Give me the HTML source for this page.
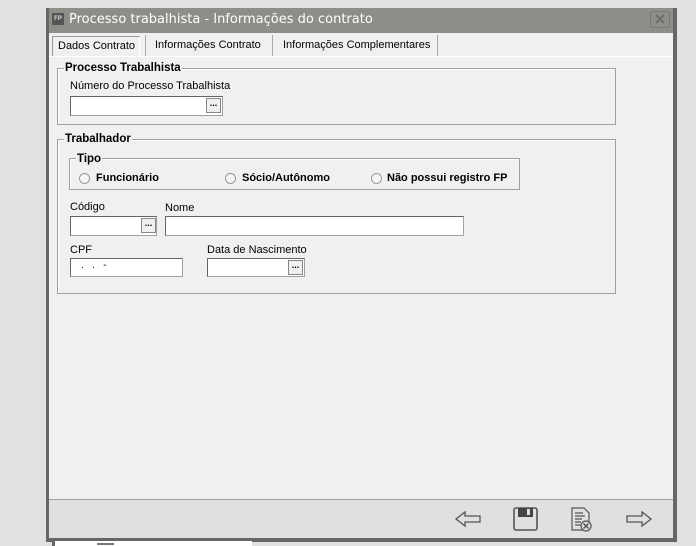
<html><head><style>
body{margin:0;width:696px;height:546px;background:#e1e1e1;position:relative;overflow:hidden;font-family:"Liberation Sans",sans-serif;font-size:11px;color:#000}
.a{position:absolute}
.inp{position:absolute;background:#fff;border:1px solid #a0a0a0;border-top-color:#646464;border-left-color:#646464;box-sizing:border-box}
.btn{position:absolute;width:15px;height:15px;background:#f0f0f0;border:1px solid #888;box-sizing:border-box;font-size:9px;font-weight:bold;text-align:center;line-height:9px}
.grp{position:absolute;border:1px solid #a0a0a0;box-sizing:border-box;box-shadow:1px 1px 0 #fff inset}
.gt{position:absolute;background:#f0f0f0;font-weight:bold;font-size:11.5px;padding:0 1px;line-height:13px}
.rd{position:absolute;width:9px;height:9px;border-radius:50%;border:1px solid #999;background:#f6f6f6}
.rt{position:absolute;font-weight:bold;font-size:11px}
</style></head><body>
<div class="a" style="left:46px;top:8px;width:631px;height:534px;background:#666"></div>
<div class="a" style="left:49px;top:8px;width:624px;height:25px;background:#8e8e88"></div>
<div class="a" style="left:52px;top:13px;width:12px;height:12px;background:#555;color:#ddd;font-size:6px;font-weight:bold;line-height:12px;text-align:center">FP</div>
<div class="a" style="left:69px;top:12px;color:#fff;font-family:'DejaVu Sans',sans-serif;font-size:13px">Processo trabalhista - Informações do contrato</div>
<div class="a" style="left:650px;top:11px;width:20px;height:17px;border:1px solid #777;border-radius:3px;box-sizing:border-box;color:#6c6c6c;font-weight:bold;font-size:14px;text-align:center;line-height:15px">✕</div>
<div class="a" style="left:49px;top:33px;width:624px;height:466px;background:#f0f0f0"></div>
<div class="a" style="left:49px;top:499px;width:624px;height:1px;background:#a0a0a0"></div>
<div class="a" style="left:49px;top:500px;width:624px;height:38px;background:#e0e0e0"></div>
<div class="a" style="left:49px;top:56px;width:624px;height:1px;background:#fff"></div>
<div class="a" style="left:52px;top:36px;width:88px;height:20px;border:1px solid #999;border-right-color:#fff;border-bottom:none;box-sizing:border-box"></div>
<div class="a" style="left:58px;top:40px">Dados Contrato</div>
<div class="a" style="left:145px;top:35px;width:1px;height:21px;background:#aaa"></div>
<div class="a" style="left:155px;top:39px">Informações Contrato</div>
<div class="a" style="left:272px;top:35px;width:1px;height:21px;background:#aaa"></div>
<div class="a" style="left:283px;top:39px">Informações Complementares</div>
<div class="a" style="left:437px;top:35px;width:1px;height:21px;background:#aaa"></div>

<div class="grp" style="left:57px;top:68px;width:559px;height:57px"></div>
<div class="gt" style="left:64px;top:62px">Processo Trabalhista</div>
<div class="a" style="left:70px;top:80px">Número do Processo Trabalhista</div>
<div class="inp" style="left:70px;top:96px;width:153px;height:20px"></div>
<div class="btn" style="left:206px;top:98px">...</div>

<div class="grp" style="left:57px;top:139px;width:559px;height:155px"></div>
<div class="gt" style="left:64px;top:133px">Trabalhador</div>
<div class="grp" style="left:69px;top:158px;width:451px;height:32px"></div>
<div class="gt" style="left:76px;top:153px">Tipo</div>
<div class="rd" style="left:79px;top:173px"></div><div class="rt" style="left:96px;top:172px">Funcionário</div>
<div class="rd" style="left:225px;top:173px"></div><div class="rt" style="left:242px;top:172px">Sócio/Autônomo</div>
<div class="rd" style="left:371px;top:173px"></div><div class="rt" style="left:387px;top:172px">Não possui registro FP</div>

<div class="a" style="left:70px;top:201px">Código</div>
<div class="inp" style="left:70px;top:216px;width:87px;height:20px"></div>
<div class="btn" style="left:141px;top:218px">...</div>
<div class="a" style="left:165px;top:202px">Nome</div>
<div class="inp" style="left:165px;top:216px;width:299px;height:20px"></div>
<div class="a" style="left:70px;top:244px">CPF</div>
<div class="inp" style="left:70px;top:258px;width:113px;height:19px"><span style="position:absolute;left:10px;top:1px;font-size:10px">.&nbsp;&nbsp;&nbsp;.&nbsp;&nbsp;&nbsp;-</span></div>
<div class="a" style="left:207px;top:244px">Data de Nascimento</div>
<div class="inp" style="left:207px;top:258px;width:98px;height:19px"></div>
<div class="btn" style="left:288px;top:260px">...</div>

<svg class="a" style="left:440px;top:500px" width="230" height="38" viewBox="0 0 230 38">
<g fill="none" stroke="#555" stroke-width="1.3">
<path d="M16 19 L25 12 V16 H40 V22 H25 V26 Z"/>
<path d="M211 19 L202 12 V16 H187 V22 H202 V26 Z"/>
<rect x="74" y="8" width="23" height="22" rx="2" stroke-width="1.6"/>
</g>
<rect x="78" y="8" width="15" height="9" fill="#444"/><rect x="87" y="9" width="3" height="6" fill="#ddd"/>
<g fill="none" stroke="#555" stroke-width="1.2"><path d="M132 8 H144 L149 13 V30 H132 Z M135 13 H143 M135 16 H145 M135 19 H142 M135 22 H141 M135 25 H141"/><circle cx="146" cy="26" r="5" fill="#ddd"/><path d="M143.5 23.5 L148.5 28.5 M148.5 23.5 L143.5 28.5" stroke-width="1.5"/></g>
</svg>
<div class="a" style="left:52px;top:541px;width:200px;height:5px;background:#fff"></div>
<div class="a" style="left:52px;top:541px;width:3px;height:5px;background:#666"></div>
<div class="a" style="left:97px;top:543px;width:17px;height:2px;background:#777"></div>
</body></html>
